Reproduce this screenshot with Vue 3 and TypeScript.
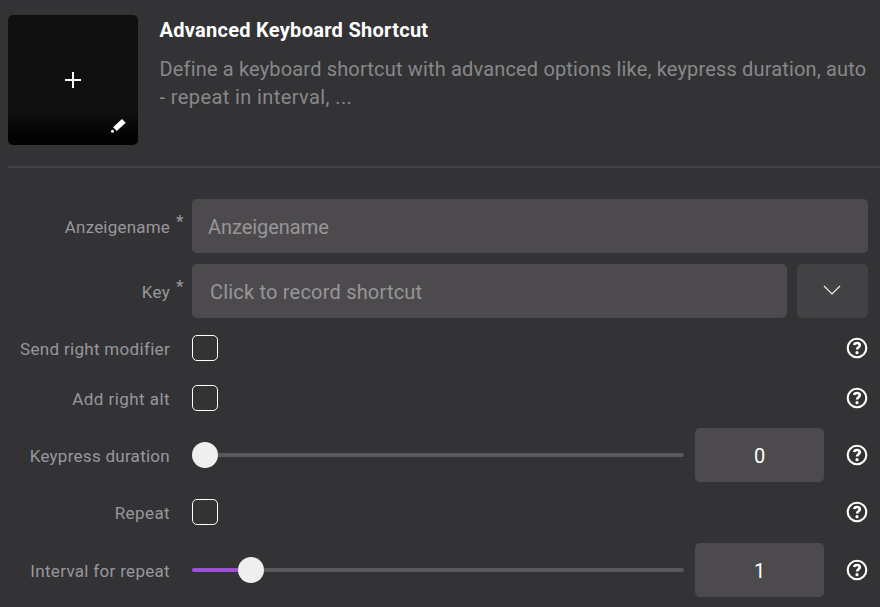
<script setup lang="ts">
import { ref } from 'vue'

interface Field {
  id: string
  label: string
  kind: 'text' | 'shortcut' | 'check' | 'range'
  placeholder?: string
  required?: boolean
  value?: number
  percent?: number
}

const fields = ref<Field[]>([
  { id: 'name', label: 'Anzeigename', kind: 'text', placeholder: 'Anzeigename', required: true },
  { id: 'key', label: 'Key', kind: 'shortcut', placeholder: 'Click to record shortcut', required: true },
  { id: 'modifier', label: 'Send right modifier', kind: 'check' },
  { id: 'alt', label: 'Add right alt', kind: 'check' },
  { id: 'duration', label: 'Keypress duration', kind: 'range', value: 0, percent: 0 },
  { id: 'repeat', label: 'Repeat', kind: 'check' },
  { id: 'interval', label: 'Interval for repeat', kind: 'range', value: 1, percent: 10 },
])
</script>

<template>
  <main class="panel">
    <header class="header">
      <button class="tile" aria-label="Edit icon">
        <svg class="plus" width="16" height="16" viewBox="0 0 16 16"><path d="M8 0v16M0 8h16" /></svg>
        <svg class="pencil" width="16" height="16" viewBox="0 0 16 16">
          <path d="M3.1 9.2 12 1l3.7 3.8-8.9 8.2z" /><circle cx="2.5" cy="13.3" r="1.5" />
        </svg>
      </button>
      <div class="intro">
        <h1>Advanced Keyboard Shortcut</h1>
        <p>Define a keyboard shortcut with advanced options like, keypress duration, auto<br /><span class="second">- repeat in interval, ...</span></p>
      </div>
    </header>

    <form class="form" @submit.prevent>
      <div v-for="f in fields" :key="f.id" class="row" :class="[f.kind, f.id]">
        <div class="label"><span class="caption">{{ f.label }}</span><span v-if="f.required" class="star">*</span></div>
        <div v-if="f.kind === 'text' || f.kind === 'shortcut'" class="input"><span>{{ f.placeholder }}</span></div>
        <button v-if="f.kind === 'shortcut'" class="drop" aria-label="Open">
          <svg width="18" height="10" viewBox="0 0 18 10"><path d="M1 1l8 8 8-8" /></svg>
        </button>
        <div v-if="f.kind === 'check'" class="box"></div>
        <template v-if="f.kind === 'range'">
          <div class="slider">
            <div class="fill" :style="{ width: f.percent + '%' }"></div>
            <div class="thumb"></div>
            <div class="rest"></div>
          </div>
          <div class="number">{{ f.value }}</div>
        </template>
        <svg v-if="f.kind === 'check' || f.kind === 'range'" class="help" width="22" height="22" viewBox="0 0 22 22">
          <circle cx="11" cy="11" r="9.3" />
          <path d="M8.1 8.1c.3-1.4 1.4-2.1 2.9-2.1 1.7 0 2.8.9 2.8 2.3 0 1.9-2.7 2-2.7 4.2" />
          <circle class="dot" cx="11" cy="15.7" r="1.6" />
        </svg>
      </div>
    </form>
  </main>
</template>

<style>
body { margin: 0; background: #333335; }
</style>

<style scoped>
.panel { box-sizing: border-box; width: 880px; height: 607px; overflow: hidden; padding: 15px 0 0 8px; background: #333335; font-family: Roboto, sans-serif; }
.header { display: flex; gap: 21px; box-sizing: border-box; height: 153px; border-bottom: 2px solid #434345; }
button { border: 0; padding: 0; }
.tile { position: relative; display: grid; place-items: center; width: 130px; height: 130px; flex: none; border-radius: 5px; background: linear-gradient(#0f0f0f 0 75%, #020202 94%); }
.plus { stroke: #fff; stroke-width: 2; }
.pencil { position: absolute; right: 12px; bottom: 11px; fill: #fff; }
.intro { padding: 1px 0 0 .5px; white-space: nowrap; }
h1 { margin: 0; color: #fff; font: 700 20px/28px Roboto, sans-serif; letter-spacing: .28px; }
p { margin: 11px 0 0; color: #88888a; font: 400 20px/28px Roboto, sans-serif; letter-spacing: .165px; }
.second { letter-spacing: .4px; }
.form { display: flex; flex-direction: column; padding: 31px 12px 0 0; }
.row { display: flex; align-items: center; height: 54px; }
.shortcut { margin-top: 11px; }
.check { height: 26px; }
.modifier { margin-top: 17px; }
.alt { margin-top: 24px; }
.duration { margin-top: 17px; }
.repeat { margin-top: 17px; }
.interval { margin-top: 18px; }
.label { position: relative; display: flex; justify-content: flex-end; width: 162px; margin-right: 22px; flex: none; white-space: nowrap; color: #99979d; font: 400 17px/24px Roboto, sans-serif; letter-spacing: .31px; padding-top: 2px; }
.name .label { letter-spacing: .2px; }
.alt .label { letter-spacing: .45px; }
.duration .label { letter-spacing: .27px; }
.repeat .label { letter-spacing: .4px; }
.star { position: absolute; left: 168px; top: -4px; font-weight: 500; letter-spacing: 0; }
.input { display: flex; align-items: center; box-sizing: border-box; flex: 1; height: 54px; padding: 2px 16px 0; border-radius: 5px; background: #4d4a4d; color: #979598; font: 400 20px/28px Roboto, sans-serif; letter-spacing: -.05px; }
.shortcut .input { padding-left: 18px; letter-spacing: .2px; }
.drop { display: grid; place-items: center; box-sizing: border-box; width: 71px; height: 54px; margin-left: 10px; padding: 0 1px 2px 0; border-radius: 5px; background: #424244; }
.drop svg { fill: none; stroke: #f0f0f0; stroke-width: 1.2; }
.box { box-sizing: border-box; width: 26px; height: 26px; border: 1px solid #fff; border-radius: 5px; }
.help { margin-left: auto; fill: none; stroke: #fff; stroke-width: 2.1; }
.help path { stroke-width: 2.6; }
.help .dot { fill: #fff; stroke: none; }
.slider { display: flex; align-items: center; width: 492px; }
.fill { height: 4px; border-radius: 2px 0 0 2px; background: #9a52d2; }
.interval .fill { max-width: 46px; }
.thumb { width: 26px; height: 26px; border-radius: 50%; background: #efefef; flex: none; }
.rest { flex: 1; height: 4px; border-radius: 0 2px 2px 0; background: #59585c; }
.number { box-sizing: border-box; width: 129px; height: 54px; margin-left: 11px; padding-top: 1px; border-radius: 5px; background: #4d4a4d; color: #fff; text-align: center; font: 400 20px/54px Roboto, sans-serif; }
</style>
